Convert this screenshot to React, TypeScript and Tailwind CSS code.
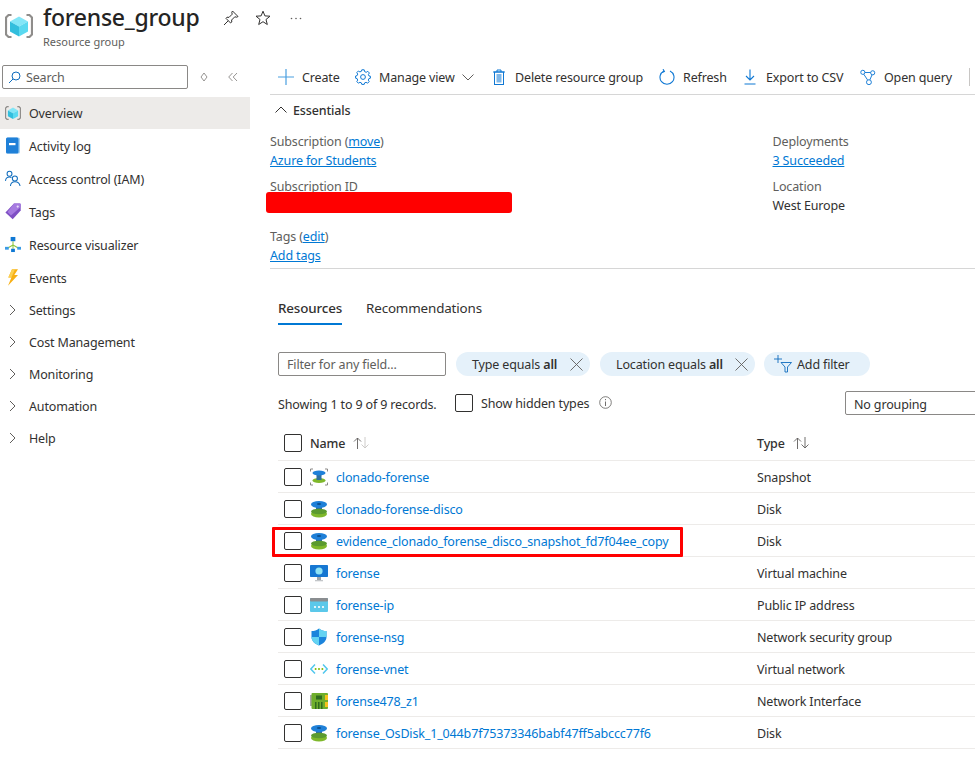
import React from "react";

function ResourceGroupIcon({ size = 28 }: { size?: number }) {
  return (
    <svg width={size} height={size} viewBox="0 0 28 28" fill="none">
      <path d="M6.5 3 H3.5 L1 5.5 V22.5 L3.5 25 H6.5" stroke="#8f8d8b" strokeWidth="2.2" />
      <path d="M21.5 3 H24.5 L27 5.5 V22.5 L24.5 25 H21.5" stroke="#8f8d8b" strokeWidth="2.2" />
      <path d="M14 4.5 L23 9.5 L14 14.5 L5 9.5 Z" fill="#83e6f7" />
      <path d="M5 9.5 L14 14.5 V24.5 L5 19.5 Z" fill="#32bedd" />
      <path d="M23 9.5 L14 14.5 V24.5 L23 19.5 Z" fill="#5ad9f0" />
    </svg>
  );
}

function DiskIcon() {
  return (
    <svg width="18" height="18" viewBox="0 0 18 18">
      <ellipse cx="9" cy="14" rx="8" ry="3.4" fill="#7fb82b" />
      <rect x="6" y="6" width="6" height="7" fill="#2f6f9f" />
      <ellipse cx="9" cy="11.5" rx="8" ry="2.8" fill="#5b9a2f" />
      <ellipse cx="9" cy="4.5" rx="8" ry="3.4" fill="#1f80d8" />
      <ellipse cx="9" cy="4" rx="2.2" ry="0.9" fill="#0b4f8f" />
    </svg>
  );
}

function SnapshotIcon() {
  return (
    <svg width="18" height="18" viewBox="0 0 18 18" fill="none">
      <path d="M3 1 H.5 V3.5 M15 1 H17.5 V3.5 M.5 14.5 V17 H3 M17.5 14.5 V17 H15" stroke="#8a8886" />
      <ellipse cx="9" cy="12.5" rx="6.5" ry="2.6" fill="#7fb82b" />
      <rect x="6.5" y="6" width="5" height="6" fill="#2f6f9f" />
      <ellipse cx="9" cy="5" rx="6.5" ry="2.6" fill="#1f80d8" />
    </svg>
  );
}

function VmIcon() {
  return (
    <svg width="18" height="18" viewBox="0 0 18 18">
      <rect x="0" y="1" width="18" height="12" rx="0.7" fill="#1677d2" />
      <circle cx="9" cy="7" r="3.6" fill="#8fe3f5" />
      <rect x="7" y="13" width="4" height="3" fill="#9ea3a8" />
      <rect x="5" y="16" width="8" height="1.3" fill="#c3c6c9" />
    </svg>
  );
}

function IpIcon() {
  return (
    <svg width="18" height="18" viewBox="0 0 18 18">
      <rect x="0" y="2" width="18" height="14" rx="1" fill="#5bc8ea" />
      <rect x="0" y="2" width="18" height="3.4" rx="1" fill="#8a8d90" />
      <circle cx="5" cy="11" r="1.1" fill="#fff" />
      <circle cx="9" cy="11" r="1.1" fill="#fff" />
      <circle cx="13" cy="11" r="1.1" fill="#fff" />
    </svg>
  );
}

function ShieldIcon() {
  return (
    <svg width="18" height="18" viewBox="0 0 18 18">
      <path d="M9 0.5 C11.5 2.5 13.5 3 16.5 3 V9 C16.5 13 13 16 9 17.5 C5 16 1.5 13 1.5 9 V3 C4.5 3 6.5 2.5 9 0.5 Z" fill="#1b84dc" />
      <path d="M9 0.5 C11.5 2.5 13.5 3 16.5 3 V9 H9 Z" fill="#64d3f2" />
      <path d="M9 9 H1.5 C1.5 13 5 16 9 17.5 Z" fill="#64d3f2" />
    </svg>
  );
}

function VnetIcon() {
  return (
    <svg width="18" height="18" viewBox="0 0 18 18" fill="none">
      <path d="M5 4.5 L.8 9 L5 13.5" stroke="#50c7ee" strokeWidth="1.5" />
      <path d="M13 4.5 L17.2 9 L13 13.5" stroke="#50c7ee" strokeWidth="1.5" />
      <circle cx="5.6" cy="9" r="1" fill="#7fba00" />
      <circle cx="9" cy="9" r="1" fill="#7fba00" />
      <circle cx="12.4" cy="9" r="1" fill="#7fba00" />
    </svg>
  );
}

function NicIcon() {
  return (
    <svg width="18" height="18" viewBox="0 0 18 18">
      <rect x="0" y="3" width="2" height="11" fill="#a6a6a6" />
      <rect x="1.5" y="1" width="16.5" height="16" rx="1" fill="#6fae2c" />
      <rect x="15" y="3" width="3" height="5" fill="#f6c21c" />
      <rect x="15" y="10" width="3" height="5" fill="#f6c21c" />
      <rect x="6" y="3.5" width="6" height="4" fill="#2f6b1f" />
      <rect x="5" y="10" width="1.5" height="7" fill="#2f6b1f" />
      <rect x="8" y="10" width="1.5" height="7" fill="#2f6b1f" />
      <rect x="11" y="10" width="1.5" height="7" fill="#2f6b1f" />
    </svg>
  );
}

function ActivityIcon() {
  return (
    <svg width="16" height="17" viewBox="0 0 16 17">
      <rect x="1" y="0.5" width="14" height="16" rx="1.5" fill="#a9d3f2" />
      <rect x="1" y="0.5" width="12.5" height="16" rx="1.5" fill="#1f80d8" />
      <rect x="4" y="6" width="6.5" height="2.2" fill="#fff" />
    </svg>
  );
}

function IamIcon() {
  return (
    <svg width="17" height="17" viewBox="0 0 17 17" fill="none" stroke="#0f6cbd" strokeWidth="1.1">
      <circle cx="4.8" cy="3.5" r="2.6" />
      <path d="M.5 11 C.8 8.6 2.4 7 4.8 7 C5.6 7 6.3 7.2 6.9 7.5" />
      <circle cx="10.5" cy="8.5" r="2.7" />
      <path d="M5.8 16.5 C6 13.6 8 12 10.5 12 C13 12 15.6 13.6 16 16.5" />
    </svg>
  );
}

function TagIcon() {
  return (
    <svg width="16" height="17" viewBox="0 0 16 17">
      <path d="M9 .6 H14.6 C15.3 .6 15.7 1 15.7 1.7 V7.5 L7.7 16.3 L.4 9.4 Z" fill="#7f4fc4" />
      <path d="M9 .6 H14.6 C15.3 .6 15.7 1 15.7 1.7 V4 L6 12.5 L2.5 9 Z" fill="#a67ae0" />
      <circle cx="12.7" cy="3.6" r="1.1" fill="#e9def8" />
    </svg>
  );
}

function VisualizerIcon() {
  return (
    <svg width="17" height="17" viewBox="0 0 17 17">
      <path d="M8.5 5 V9 M8.5 9 L2.5 12.5 M8.5 9 L14.5 12.5 M8.5 9 V13" stroke="#8cc63f" strokeWidth="1.1" fill="none" />
      <rect x="6" y="0.5" width="5" height="4.5" fill="#0f78d4" />
      <rect x="0" y="11" width="4" height="3" fill="#3a9be6" />
      <rect x="13" y="11" width="4" height="3" fill="#3a9be6" />
      <rect x="6.5" y="13" width="4" height="3.5" fill="#0f78d4" />
    </svg>
  );
}

function BoltIcon() {
  return (
    <svg width="12" height="17" viewBox="0 0 12 17">
      <path d="M5 .3 H11 L7.3 6 H11 L1 16.7 L4.4 8.5 H1.3 Z" fill="#f8b015" />
      <path d="M5 .3 H8 L4.4 8.5 H1.3 Z" fill="#fbd052" />
    </svg>
  );
}

function Chevron({ className = "" }: { className?: string }) {
  return (
    <svg width="7" height="12" viewBox="0 0 7 12" fill="none" className={className}>
      <path d="M1 1 L6 6 L1 11" stroke="#605e5c" strokeWidth="1" />
    </svg>
  );
}

function Check() {
  return <div className="w-[18px] h-[18px] shrink-0 rounded-[2px] border border-[#323130] bg-white" />;
}

const nav: { label: string; icon: React.ReactNode }[] = [
  { label: "Activity log", icon: <ActivityIcon /> },
  { label: "Access control (IAM)", icon: <IamIcon /> },
  { label: "Tags", icon: <TagIcon /> },
  { label: "Resource visualizer", icon: <VisualizerIcon /> },
  { label: "Events", icon: <BoltIcon /> },
];

const groups = ["Settings", "Cost Management", "Monitoring", "Automation", "Help"];

function Sidebar() {
  return (
    <aside className="w-[250px] shrink-0">
      <div className="flex items-center h-[24px] pl-[2px] mt-[5px]">
        <div className="w-[186px] h-[24px] border border-[#8a8886] rounded-[2px] flex items-center pl-[5px] gap-[5px]">
          <svg width="13" height="13" viewBox="0 0 13 13" fill="none">
            <circle cx="8" cy="5" r="4" stroke="#0f6cbd" strokeWidth="1" />
            <path d="M5 8 L1 12" stroke="#0f6cbd" strokeWidth="1" />
          </svg>
          <span className="text-[#605e5c]">Search</span>
        </div>
        <svg width="8" height="10" viewBox="0 0 8 10" fill="none" className="ml-[12px]">
          <path d="M4 1 L7 5 L4 9 L1 5 Z" stroke="#8a8886" strokeWidth="0.9" />
        </svg>
        <svg width="10" height="10" viewBox="0 0 10 10" fill="none" className="ml-[20px]">
          <path d="M4.5 1 L.7 5 L4.5 9 M9 1 L5.2 5 L9 9" stroke="#8a8886" strokeWidth="0.9" />
        </svg>
      </div>
      <div className="mt-[8px] h-[32px] bg-[#edebe9] flex items-center pl-[5px] gap-[8px]">
        <span className="w-[16px] flex justify-center"><ResourceGroupIcon size={16} /></span>
        <span>Overview</span>
      </div>
      {nav.map((n) => (
        <div key={n.label} className="h-[33px] flex items-center pl-[5px] gap-[8px]">
          <span className="w-[16px] flex justify-center">{n.icon}</span>
          <span className="pt-[2px]">{n.label}</span>
        </div>
      ))}
      {groups.map((g) => (
        <div key={g} className="h-[32px] flex items-center pl-[9px] gap-[13px]">
          <Chevron />
          <span>{g}</span>
        </div>
      ))}
    </aside>
  );
}

function ToolIcon({ kind }: { kind: string }) {
  const c = "#0f78d4";
  if (kind === "plus")
    return (
      <svg width="16" height="16" viewBox="0 0 16 16"><path d="M8 0 V16 M0 8 H16" stroke="#4a9fe0" strokeWidth="1.2" /></svg>
    );
  if (kind === "gear")
    return (
      <svg width="16" height="16" viewBox="0 0 16 16" fill="none" stroke={c} strokeWidth="1">
        <circle cx="8" cy="8" r="2.4" />
        <path d="M6.8 .8 H9.2 L9.6 2.6 L11.2 3.3 L12.8 2.3 L14.4 4 L13.4 5.5 L14 7 L15.4 7.2 V9.2 L13.9 9.6 L13.3 11.1 L14.2 12.6 L12.6 14.2 L11.1 13.3 L9.6 13.9 L9.2 15.4 H6.8 L6.4 13.9 L4.9 13.3 L3.4 14.2 L1.8 12.6 L2.7 11.1 L2.1 9.6 L.6 9.2 V7 L2.1 6.6 L2.7 5.1 L1.8 3.6 L3.4 2 L4.9 2.9 L6.4 2.3 Z" />
      </svg>
    );
  if (kind === "trash")
    return (
      <svg width="14" height="16" viewBox="0 0 14 16" fill="none">
        <path d="M1 3 H13 M5 3 V1 H9 V3" stroke={c} />
        <rect x="2.5" y="3" width="9" height="12.5" stroke={c} />
        <rect x="4.5" y="5" width="5" height="8.5" fill="#7fb7e8" />
      </svg>
    );
  if (kind === "refresh")
    return (
      <svg width="16" height="16" viewBox="0 0 16 16" fill="none" stroke={c} strokeWidth="1.1">
        <path d="M5 2 A7 7 0 1 0 11 2" />
        <path d="M4 .2 L5.4 2.4 L3 3.4" />
      </svg>
    );
  if (kind === "export")
    return (
      <svg width="12" height="16" viewBox="0 0 12 16" fill="none" stroke={c} strokeWidth="1.1">
        <path d="M6 .5 V11 M2 7 L6 11 L10 7 M.5 15 H11.5" />
      </svg>
    );
  return (
    <svg width="17" height="17" viewBox="0 0 17 17" fill="none" stroke={c} strokeWidth="1">
      <circle cx="3" cy="3" r="2.2" />
      <circle cx="13.5" cy="3.5" r="2.2" />
      <circle cx="9.5" cy="13.5" r="2.6" />
      <path d="M5.2 3.2 H11.3 M4 5 L8 11 M12.8 5.6 L10.5 11" />
    </svg>
  );
}

function Toolbar() {
  const items: { kind: string; label: string; w: number }[] = [
    { kind: "plus", label: "Create", w: 77 },
    { kind: "gear", label: "Manage view", w: 136 },
    { kind: "trash", label: "Delete resource group", w: 168 },
    { kind: "refresh", label: "Refresh", w: 83 },
    { kind: "export", label: "Export to CSV", w: 118 },
    { kind: "open", label: "Open query", w: 109 },
  ];
  return (
    <div className="h-[30px] border-b border-[#d6d6d6] flex items-start pl-[8px] pt-[1px]">
      {items.map((it) => (
        <div key={it.label} style={{ width: it.w }} className="h-[22px] flex items-center gap-[8px] shrink-0 whitespace-nowrap">
          <span className="w-[16px] flex justify-center"><ToolIcon kind={it.kind} /></span>
          <span>{it.label}</span>
          {it.kind === "gear" && (
            <svg width="12" height="7" viewBox="0 0 12 7" fill="none" className="-ml-[1px]">
              <path d="M.5 .5 L6 6 L11.5 .5" stroke="#605e5c" />
            </svg>
          )}
        </div>
      ))}
      <div className="w-px h-[18px] mt-[2px] bg-[#c8c6c4]" />
    </div>
  );
}

function Essentials() {
  const link = "text-[#0078d4] underline";
  return (
    <section className="relative border-b border-[#d6d6d6] h-[174px]">
      <div className="h-[29px] flex items-center pl-[5px] gap-[6px]">
        <svg width="12" height="7" viewBox="0 0 12 7" fill="none"><path d="M.5 6.5 L6 1 L11.5 6.5" stroke="#323130" /></svg>
        <span className="font-medium pt-[2px]">Essentials</span>
      </div>
      <div className="grid grid-cols-[502.5px_1fr] mt-[8px]">
        <div className="text-[#605e5c]">
          <div>Subscription (<span className={link}>move</span>)</div>
          <div className={link}>Azure for Students</div>
          <div className="mt-[7px]">Subscription ID</div>
          <div className="h-[19px]" />
          <div className="mt-[12px]">Tags (<span className={link}>edit</span>)</div>
          <div className={link}>Add tags</div>
        </div>
        <div>
          <div className="text-[#605e5c]">Deployments</div>
          <div className={link}>3 Succeeded</div>
          <div className="mt-[7px] text-[#605e5c]">Location</div>
          <div>West Europe</div>
        </div>
      </div>
      <div className="absolute left-[-4px] top-[97px] w-[246px] h-[21px] bg-[#ff0000] rounded-[3px]" />
    </section>
  );
}

function Pill({ field, w }: { field: string; w: number }) {
  return (
    <div style={{ width: w }} className="h-[24px] rounded-[12px] bg-[#e5f1fa] flex items-center pl-[16px] shrink-0 whitespace-nowrap">
      <span>{field} equals <b className="font-semibold">all</b></span>
      <svg width="13" height="13" viewBox="0 0 13 13" className="ml-auto mr-[7px]">
        <path d="M.5 .5 L12.5 12.5 M12.5 .5 L.5 12.5" stroke="#605e5c" strokeWidth="0.9" />
      </svg>
    </div>
  );
}

const rows: { name: string; type: string; icon: React.ReactNode }[] = [
  { name: "clonado-forense", type: "Snapshot", icon: <SnapshotIcon /> },
  { name: "clonado-forense-disco", type: "Disk", icon: <DiskIcon /> },
  { name: "evidence_clonado_forense_disco_snapshot_fd7f04ee_copy", type: "Disk", icon: <DiskIcon /> },
  { name: "forense", type: "Virtual machine", icon: <VmIcon /> },
  { name: "forense-ip", type: "Public IP address", icon: <IpIcon /> },
  { name: "forense-nsg", type: "Network security group", icon: <ShieldIcon /> },
  { name: "forense-vnet", type: "Virtual network", icon: <VnetIcon /> },
  { name: "forense478_z1", type: "Network Interface", icon: <NicIcon /> },
  { name: "forense_OsDisk_1_044b7f75373346babf47ff5abccc77f6", type: "Disk", icon: <DiskIcon /> },
];

function SortArrows({ dim }: { dim?: boolean }) {
  return (
    <svg width="17" height="12" viewBox="0 0 17 12" fill="none">
      <path d="M4.5 12 V1 M1 4.5 L4.5 1 L8 4.5" stroke="#605e5c" strokeWidth="0.9" />
      <path d="M12 0 V11 M8.5 7.5 L12 11 L15.5 7.5" stroke={dim ? "#c8c6c4" : "#605e5c"} strokeWidth="0.9" />
    </svg>
  );
}

function Resources() {
  return (
    <section className="pl-[8px]">
      <div className="flex gap-[24px] mt-[30px] h-[25px] items-start text-[13.4px]">
        <div className="h-[26px] border-b-2 border-[#0078d4] font-medium">Resources</div>
        <div>Recommendations</div>
      </div>
      <div className="flex items-center gap-[10px] mt-[28px] h-[24px]">
        <div className="w-[168px] h-[24px] border border-[#8a8886] rounded-[2px] flex items-center pl-[8px] text-[#605e5c] shrink-0">Filter for any field...</div>
        <Pill field="Type" w={134} />
        <Pill field="Location" w={155} />
        <div className="-ml-[1px] w-[106px] h-[24px] rounded-[12px] bg-[#e5f1fa] flex items-center pl-[10px] gap-[5px] shrink-0">
          <svg width="18" height="18" viewBox="0 0 18 18" fill="none" stroke="#0f6cbd" strokeWidth="0.9">
            <path d="M4 0 V8 M0 4 H8" />
            <path d="M7 7.5 H17.5 L13.5 12 V17 H11 V12 Z" />
          </svg>
          <span>Add filter</span>
        </div>
      </div>
      <div className="flex items-center h-[24px] mt-[15px] whitespace-nowrap">
        <span className="w-[177px] shrink-0 pt-[3px]">Showing 1 to 9 of 9 records.</span>
        <Check />
        <span className="ml-[8px] w-[109px] shrink-0">Show hidden types</span>
        <svg width="13" height="13" viewBox="0 0 13 13" fill="none" className="ml-[9px] shrink-0 -mt-[2px]">
          <circle cx="6.5" cy="6.5" r="5.8" stroke="#605e5c" strokeWidth="0.8" />
          <path d="M6.5 5.5 V10 M6.5 3 V4.2" stroke="#605e5c" strokeWidth="0.9" />
        </svg>
        <div className="ml-[233px] w-[140px] h-[24px] shrink-0 border border-[#8a8886] rounded-l-[2px] flex items-center pl-[8px] pt-[3px]">No grouping</div>
      </div>
      <div className="grid grid-cols-[479px_1fr] items-center h-[36px] mt-[10px] border-b border-[#edebe9]">
        <div className="flex items-center pl-[6px] gap-[8px]">
          <Check />
          <span className="font-medium pt-[2px]">Name</span>
          <SortArrows dim />
        </div>
        <div className="flex items-center gap-[8px]">
          <span className="font-medium pt-[2px]">Type</span>
          <SortArrows />
        </div>
      </div>
      <div className="relative">
        {rows.map((r) => (
          <div key={r.name} className="grid grid-cols-[479px_1fr] items-center h-[32px] border-b border-[#edebe9]">
            <div className="flex items-center pl-[6px]">
              <Check />
              <span className="w-[18px] ml-[8px] flex justify-center">{r.icon}</span>
              <span className="ml-[8px] pt-[2px] text-[#0078d4] whitespace-nowrap">{r.name}</span>
            </div>
            <div className="whitespace-nowrap pt-[2px]">{r.type}</div>
          </div>
        ))}
        <div className="absolute left-[-6px] top-[66px] w-[411px] h-[30px] border-[3px] border-[#ff0000] rounded-[1px]" />
      </div>
    </section>
  );
}

export default function App() {
  return (
    <div className="w-[975px] h-[763px] overflow-hidden bg-white text-[#323130] text-[12.5px] tracking-[-0.15px] leading-[19px] font-['Noto_Sans','Open_Sans',sans-serif]">
      <header className="h-[60px] flex items-start">
        <div className="mt-[12px] ml-[5px] w-[30px] shrink-0"><ResourceGroupIcon /></div>
        <div className="ml-[8px] pt-[1px] w-[176px]">
          <div className="text-[23px] tracking-[-0.25px] leading-[32px] font-medium whitespace-nowrap text-[#252423]">forense_group</div>
          <div className="text-[11px] tracking-normal leading-[16px] mt-[1px] text-[#605e5c]">Resource group</div>
        </div>
        <div className="flex items-center gap-[16px] mt-[10px] ml-[4px]">
          <svg width="16" height="16" viewBox="0 0 16 16" fill="none" stroke="#323130" strokeWidth="1">
            <path d="M9.5 1 L15 6.5 L13.7 7.2 L11.8 6.8 L8.6 10 L8.8 12 L7.6 13 L3 8.4 L4 7.2 L6 7.4 L9.2 4.2 L8.8 2.3 Z M5.2 10.8 L1 15" />
          </svg>
          <svg width="16" height="16" viewBox="0 0 16 16" fill="none" stroke="#323130" strokeWidth="1">
            <path d="M8 1.2 L9.9 5.9 L15 6.2 L11 9.5 L12.3 14.5 L8 11.7 L3.7 14.5 L5 9.5 L1 6.2 L6.1 5.9 Z" />
          </svg>
          <svg width="12" height="3" viewBox="0 0 12 3" fill="#605e5c" className="ml-[3px]">
            <circle cx="1.5" cy="1.5" r="0.8" />
            <circle cx="6" cy="1.5" r="0.8" />
            <circle cx="10.5" cy="1.5" r="0.8" />
          </svg>
        </div>
      </header>
      <div className="flex">
        <Sidebar />
        <main className="flex-1 min-w-0 ml-[20px] pt-[5px]">
          <Toolbar />
          <Essentials />
          <Resources />
        </main>
      </div>
    </div>
  );
}
